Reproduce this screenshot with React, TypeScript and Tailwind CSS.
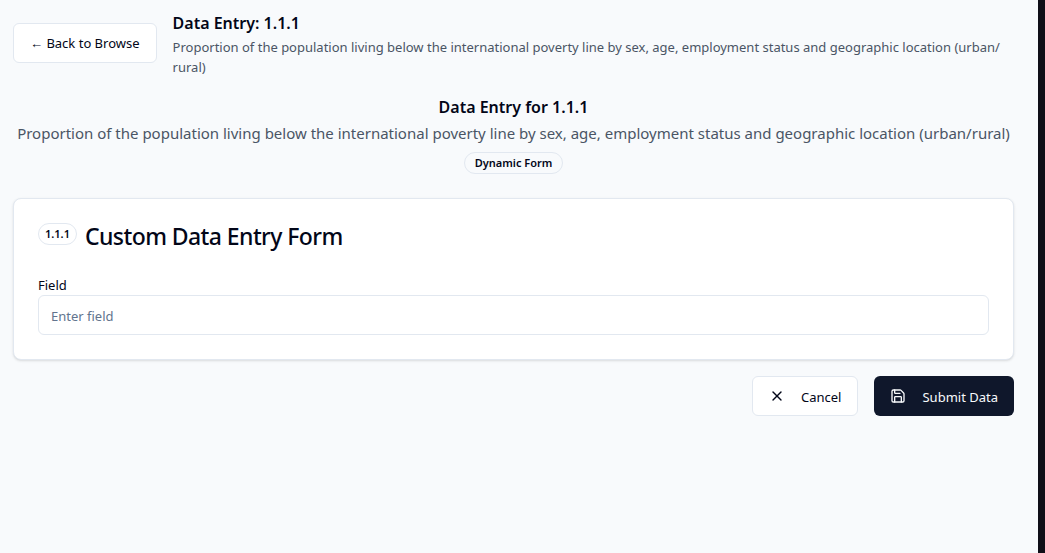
import { Save, X } from "lucide-react";
import type { ReactNode } from "react";

const indicator = {
  code: "1.1.1",
  nameStart:
    "Proportion of the population living below the international poverty line by sex, age, employment status and geographic location (urban/",
  nameEnd: "rural)",
};

function Badge({ compact = false, children }: { compact?: boolean; children: ReactNode }) {
  return (
    <span
      className={`inline-flex h-[22px] items-center rounded-full border border-slate-200 pt-px text-[11px] font-semibold text-slate-950 ${
        compact ? "px-1.5" : "px-2.5"
      }`}
    >
      {children}
    </span>
  );
}

export default function App() {
  return (
    <div className="min-h-screen border-r-7 border-[#0f0e17] bg-slate-50 pt-2 pr-6 pb-8 pl-[13px] font-['Noto_Sans','Open_Sans',sans-serif] text-slate-950">
      <header className="flex items-center gap-4">
        <button
          type="button"
          className="h-10 shrink-0 rounded-md border border-slate-200 bg-white px-4 pt-0.5 text-[13px] whitespace-nowrap"
        >
          ← Back to Browse
        </button>
        <div className="pt-px">
          <h1 className="text-base leading-7 font-semibold">Data Entry: {indicator.code}</h1>
          <p className="text-[13px] leading-5 text-gray-600">
            {indicator.nameStart}
            <wbr />
            {indicator.nameEnd}
          </p>
        </div>
      </header>

      <main className="mt-4">
        <div className="text-center">
          <h2 className="text-base leading-7 font-semibold">Data Entry for {indicator.code}</h2>
          <p className="text-[15px] leading-6 text-gray-600">
            {indicator.nameStart}
            {indicator.nameEnd}
          </p>
          <div className="mt-[7px] flex justify-center">
            <Badge>Dynamic Form</Badge>
          </div>
        </div>

        <form onSubmit={(event) => event.preventDefault()}>
          <section className="mt-6 rounded-lg border border-slate-200 bg-white p-6 shadow-sm">
            <div className="flex h-6 items-start gap-2">
              <Badge compact>{indicator.code}</Badge>
              <h3 className="pt-px text-[23px] leading-6 font-medium tracking-tight">
                Custom Data Entry Form
              </h3>
            </div>
            <div className="mt-6">
              <label htmlFor="field" className="block pt-1 text-[13px] leading-5">
                Field
              </label>
              <input
                id="field"
                type="text"
                placeholder="Enter field"
                className="block h-10 w-full rounded-md border border-slate-200 bg-white px-3 pt-px text-[13px] placeholder:text-slate-500"
              />
            </div>
          </section>

          <div className="mt-4 flex justify-end gap-4">
            <button
              type="button"
              className="flex h-10 items-center gap-4 rounded-md border border-slate-200 bg-white px-4 text-[13px]"
            >
              <X size={16} />
              <span className="pt-1">Cancel</span>
            </button>
            <button
              type="submit"
              className="flex h-10 items-center gap-4 rounded-md bg-slate-900 px-4 text-[13px] text-slate-50"
            >
              <Save size={16} />
              <span className="pt-1">Submit Data</span>
            </button>
          </div>
        </form>
      </main>
    </div>
  );
}
